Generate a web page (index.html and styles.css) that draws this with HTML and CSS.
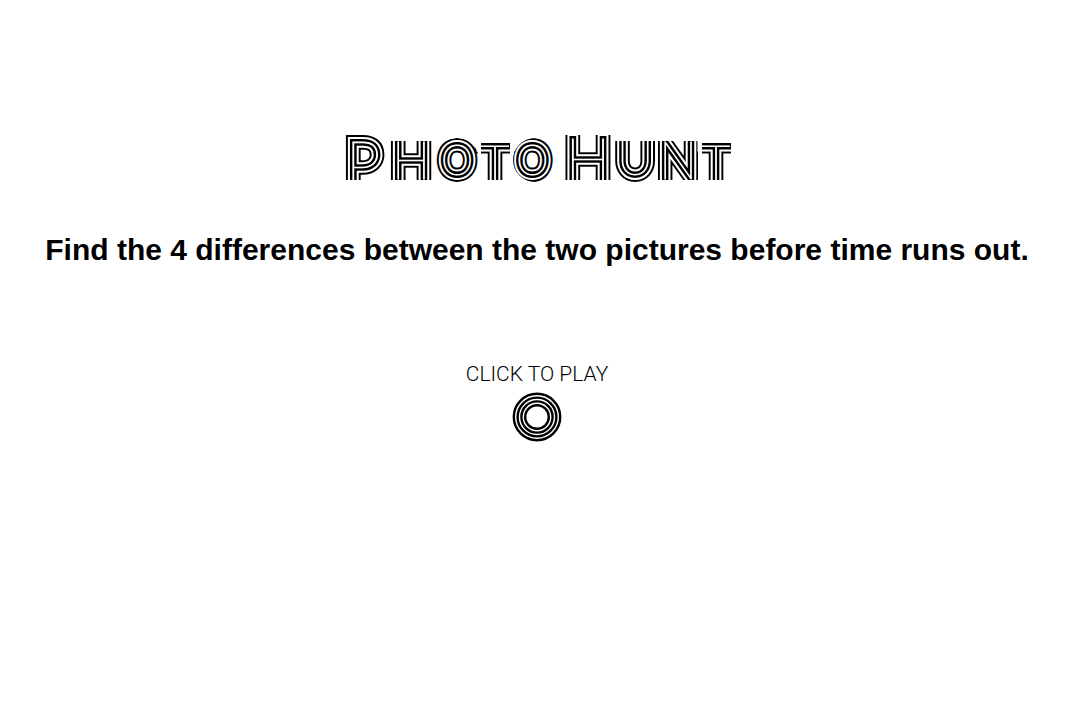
FILE: index.html
```html
<!DOCTYPE html>
<html lang="en">
<head>
<meta charset="utf-8">
<title>Photo Hunt</title>
<link rel="stylesheet" href="styles.css">
</head>
<body>
<main class="start">
  <h1 class="title">
    <svg class="logo" viewBox="0 0 392 52" width="392" height="52" role="img" aria-label="Photo Hunt">
      <defs>
        <clipPath id="letters">
          <path d="M0 0H47V48H0zM49 9H91V48H49zM140 9H169V48H140zM224 3H271V48H224zM272 9H316V52H272zM317 9H357V48H317zM361 9H390V48H361z"/>
          <circle cx="116" cy="28" r="22"/>
          <circle cx="194" cy="28" r="22"/>
        </clipPath>
        <text id="word"><tspan class="cap" x="22" y="54">P</tspan><tspan class="mid" x="70" y="47">H</tspan><tspan class="round" x="116" y="43">O</tspan><tspan class="tee" x="154" y="49">T</tspan><tspan class="round" x="196" y="43">O</tspan> <tspan class="big" x="247" y="49">H</tspan><tspan class="mid" x="294" y="43">U</tspan><tspan class="mid" x="337" y="47">N</tspan><tspan class="tee" x="375" y="49">T</tspan></text>
      </defs>
      <g clip-path="url(#letters)">
        <use href="#word" class="line-outer"/>
        <use href="#word" class="gap-outer"/>
        <use href="#word" class="line-inner"/>
        <use href="#word" class="gap-inner"/>
      </g>
    </svg>
  </h1>
  <h2 class="rules">Find the 4 differences between the two pictures before time runs out.</h2>
  <button class="play" type="button">
    <span>CLICK TO PLAY</span>
    <svg class="rings" viewBox="0 0 50 50" width="50" height="50" aria-hidden="true">
      <circle cx="25" cy="25" r="11.8"/>
      <circle cx="25" cy="25" r="15.6"/>
      <circle cx="25" cy="25" r="19.4"/>
      <circle cx="25" cy="25" r="23.2"/>
    </svg>
  </button>
</main>
</body>
</html>
```
FILE: styles.css
```css
body {
  margin: 0;
  background: #fff;
  color: #000;
  font-family: "Liberation Sans", Arial, sans-serif;
}

.start {
  display: flex;
  flex-direction: column;
  align-items: center;
  padding: 132px 18px 0 0;
}

.title {
  margin: 0;
  line-height: 0;
}

#word {
  font-family: Lato, sans-serif;
  font-weight: 100;
  text-anchor: middle;
}

.cap { font-size: 62px; }
.mid { font-size: 51px; }
.round { font-size: 41px; }
.tee { font-size: 50px; }
.big { font-size: 60px; }

.line-outer { fill: #000; stroke: #000; stroke-width: 14px; }
.gap-outer { fill: #fff; stroke: #fff; stroke-width: 10px; }
.line-inner { fill: #000; stroke: #000; stroke-width: 6px; }
.gap-inner { fill: #fff; stroke: #fff; stroke-width: 1px; }

.rules {
  margin: 48px 0 0;
  font-size: 30px;
  line-height: 36px;
  text-align: center;
}

.play {
  display: flex;
  flex-direction: column;
  align-items: center;
  gap: 6px;
  margin: 94px 0 0;
  padding: 0;
  border: 0;
  background: none;
  color: inherit;
  font: 300 21px/24px Roboto, "Liberation Sans", sans-serif;
  cursor: pointer;
}

.rings {
  fill: none;
  stroke: #000;
  stroke-width: 2.4px;
}
```
